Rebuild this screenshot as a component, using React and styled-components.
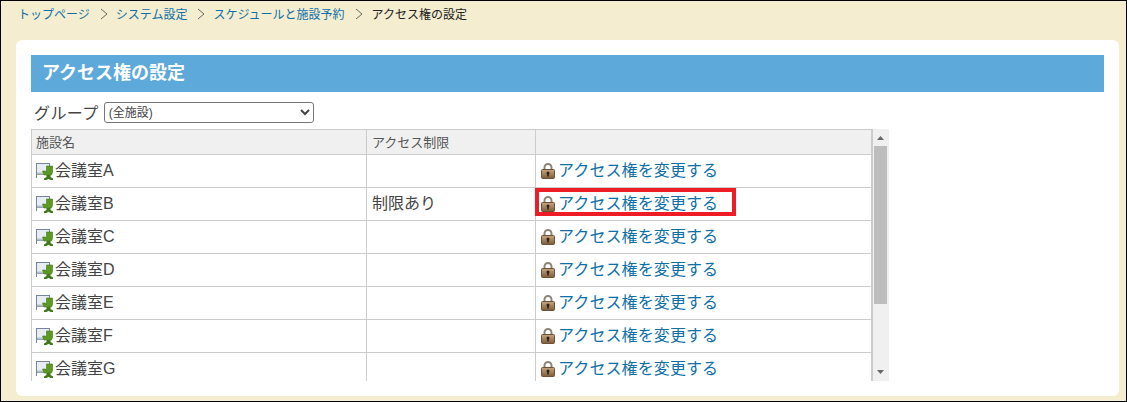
import React from 'react'
import styled, { createGlobalStyle } from 'styled-components'

const Global = createGlobalStyle`
  html, body { margin: 0; padding: 0; }
  body { font-family: "Liberation Sans", "Noto Sans CJK JP", sans-serif; }
`
const Page = styled.div`
  width: 1127px;
  height: 402px;
  box-sizing: border-box;
  border: 1px solid #000;
  background: #f4edcf;
  padding: 0 7px 5px 15px;
  display: flex;
  flex-direction: column;
  overflow: hidden;
`
const Crumbs = styled.div`
  height: 39px;
  display: flex;
  align-items: flex-start;
  padding: 6px 0 0 2px;
  box-sizing: border-box;
  font-size: 12px;
  line-height: 16px;
`
const Crumb = styled.a`
  color: #0f6fa8;
`
const CrumbNow = styled.span`
  margin-left: 1px;
  color: #222;
`
const Sep = styled.svg`
  width: 9px;
  height: 12px;
  margin: 1px 7px 0 10px;
  fill: none;
  stroke: #666;
  stroke-width: 1;
`
const Card = styled.div`
  flex: 1;
  background: #fff;
  border-radius: 6px;
  padding: 15px;
`
const Title = styled.h1`
  margin: 0;
  height: 37px;
  background: #5da9da;
  color: #fff;
  font-size: 18px;
  font-weight: 700;
  line-height: 37px;
  padding-left: 11px;
`
const GroupRow = styled.div`
  display: flex;
  align-items: center;
  height: 22px;
  margin-top: 9px;
  padding-left: 3px;
  color: #444;
  font-size: 16px;
  letter-spacing: 0.4px;
`
const Select = styled.select`
  width: 210px;
  height: 21px;
  margin-left: 5px;
  box-sizing: border-box;
  border: 1px solid #767676;
  border-radius: 3px;
  background: #fff;
  color: #444;
  font-family: inherit;
  font-size: 12px;
  letter-spacing: 0;
  padding: 2px 0 0 0;
`
const Frame = styled.div`
  margin-top: 6px;
  width: 858px;
  height: 252px;
  display: flex;
  overflow: hidden;
`
const Grid = styled.div`
  width: 842px;
  box-sizing: border-box;
  border-left: 1px solid #ccc;
  border-right: 2px solid #ccc;
  border-top: 1px solid #ccc;
  display: grid;
  grid-template-columns: 334px 169px 1fr;
  grid-template-rows: 25px;
  grid-auto-rows: 33px;
  align-content: start;
  color: #444;
  font-size: 16px;
`
const Head = styled.div`
  background: #f0f0f0;
  border-bottom: 1px solid #ccc;
  border-left: ${p => (p.$first ? 'none' : '1px solid #ccc')};
  box-sizing: border-box;
  display: flex;
  align-items: center;
  padding: 0 0 2px ${p => (p.$first ? '4px' : '5px')};
  font-size: 13px;
  color: #555;
`
const Cell = styled.div`
  box-sizing: border-box;
  border-bottom: 1px solid #ccc;
  border-left: ${p => (p.$first ? 'none' : '1px solid #ccc')};
  display: flex;
  align-items: center;
  padding: 0 0 4px ${p => p.$pad || 5}px;
  white-space: nowrap;
`
const RoomIcon = styled.svg`
  margin: 4px 2px 0 0;
  flex: none;
`
const LockIcon = styled.svg`
  margin-top: 4px;
  flex: none;
`
const Change = styled.a`
  position: relative;
  display: flex;
  align-items: center;
  gap: 2px;
  color: #0f6fa8;
  letter-spacing: 0.1px;
`
const Highlight = styled.span`
  position: absolute;
  left: -5px;
  top: -2px;
  width: 201px;
  height: 28px;
  box-sizing: border-box;
  border: 4px solid #ee1c25;
`
const Scrollbar = styled.div`
  flex: 1;
  padding-right: 1px;
  background: #f0f0f0;
  display: flex;
  flex-direction: column;
  align-items: center;
`
const Arrow = styled.svg`
  width: 7px;
  height: 4px;
  margin: ${p => (p.$down ? '6px 0 7px' : '7px 0 6px')};
  fill: #666;
`
const Thumb = styled.div`
  width: 13px;
  height: 158px;
  background: #bdbdbd;
`
const Spacer = styled.div`
  flex: 1;
`

const Facility = () => (
  <RoomIcon width="17" height="18" viewBox="0 0 17 18">
    <rect x="0.500" y="1.500" width="13" height="11" fill="#e8edf3" stroke="#75859a" />
    <path d="M0.500 2v14" stroke="#75859a" />
    <path d="M1 11.500h7" stroke="#b4bfcc" strokeWidth="2" />
    <path d="M10.500 4h6v6.500l-1 2.500H8l-1.500-4h3l1 1.500z" fill="#5c9a22" stroke="#3f7a17" strokeWidth="0.600" />
    <path d="M10.500 13h4v2l2.500 1.500V18h-2.500l-2-1.300-2 1.300H8v-1.500l2.500-1.500z" fill="#3f7a17" />
  </RoomIcon>
)

const Lock = () => (
  <LockIcon width="16" height="16" viewBox="0 0 16 16">
    <defs>
      <linearGradient id="lockBody" x1="0" y1="0" x2="0" y2="1">
        <stop offset="0" stopColor="#c8a680" />
        <stop offset="1" stopColor="#7d5c3c" />
      </linearGradient>
    </defs>
    <path d="M4.500 7V4.500a3.500 3.500 0 0 1 7 0V7" fill="none" stroke="#8d8478" strokeWidth="2" />
    <rect x="1.500" y="6.500" width="13" height="9" rx="1" fill="url(#lockBody)" stroke="#6e5238" />
    <circle cx="8" cy="10" r="1.500" fill="#2b2018" />
    <rect x="7.200" y="10" width="1.600" height="3.500" fill="#2b2018" />
  </LockIcon>
)

const Chevron = () => (
  <Sep viewBox="0 0 9 12"><path d="M1 1l6 5-6 5" /></Sep>
)

const rooms = [
  { name: '会議室A' },
  { name: '会議室B', limit: '制限あり', marked: true },
  { name: '会議室C' },
  { name: '会議室D' },
  { name: '会議室E' },
  { name: '会議室F' },
  { name: '会議室G' },
]

export default function App() {
  return (
    <Page>
      <Global />
      <Crumbs>
        <Crumb>トップページ</Crumb>
        <Chevron />
        <Crumb>システム設定</Crumb>
        <Chevron />
        <Crumb>スケジュールと施設予約</Crumb>
        <Chevron />
        <CrumbNow>アクセス権の設定</CrumbNow>
      </Crumbs>
      <Card>
        <Title>アクセス権の設定</Title>
        <GroupRow>
          グループ
          <Select defaultValue="all">
            <option value="all">(全施設)</option>
          </Select>
        </GroupRow>
        <Frame>
          <Grid>
            <Head $first>施設名</Head>
            <Head>アクセス制限</Head>
            <Head />
            {rooms.map(room => (
              <React.Fragment key={room.name}>
                <Cell $first $pad={4}><Facility />{room.name}</Cell>
                <Cell>{room.limit}</Cell>
                <Cell $pad={4}>
                  <Change>
                    {room.marked && <Highlight />}
                    <Lock />アクセス権を変更する
                  </Change>
                </Cell>
              </React.Fragment>
            ))}
          </Grid>
          <Scrollbar>
            <Arrow viewBox="0 0 7 4"><path d="M3.500 0L7 4H0z" /></Arrow>
            <Thumb />
            <Spacer />
            <Arrow $down viewBox="0 0 7 4"><path d="M0 0h7L3.500 4z" /></Arrow>
          </Scrollbar>
        </Frame>
      </Card>
    </Page>
  )
}
